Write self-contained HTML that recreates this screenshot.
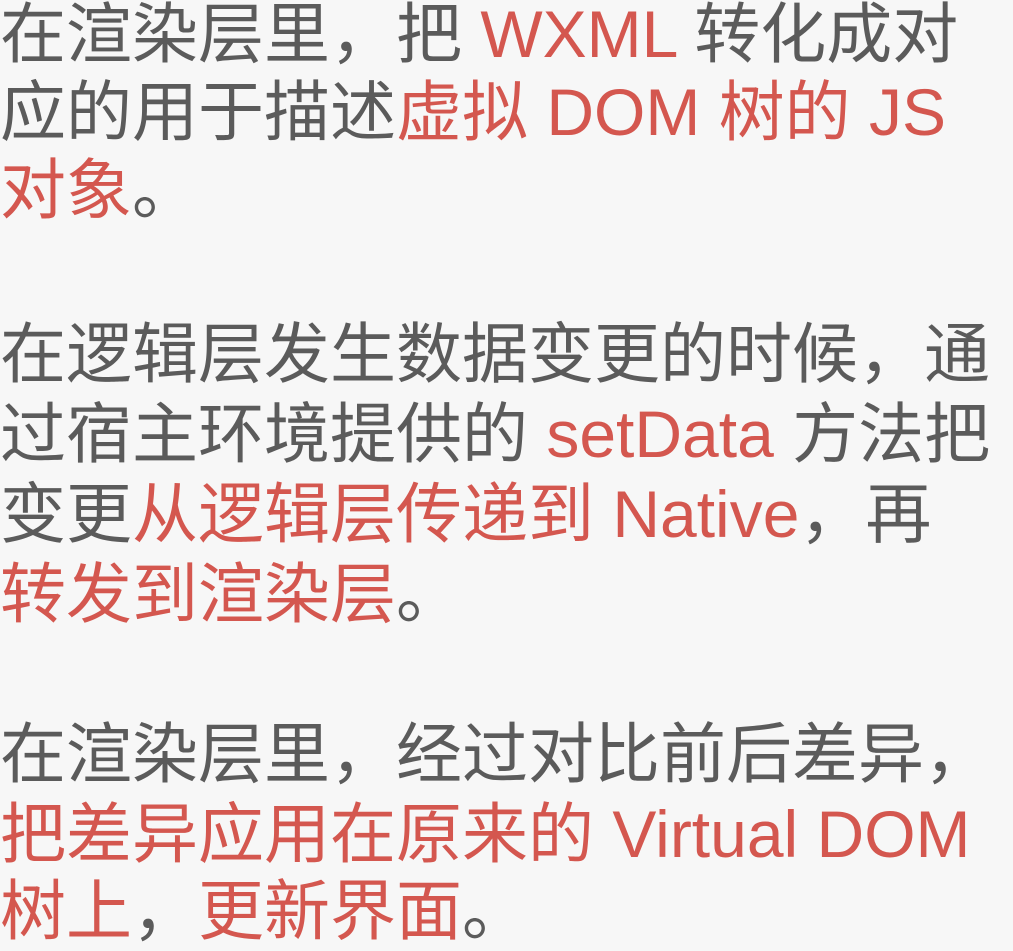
<!DOCTYPE html>
<html><head><meta charset="utf-8"><style>
html,body{margin:0;padding:0;background:#f7f7f7;width:1013px;height:943px;overflow:hidden}
.l{position:absolute;left:0;height:80px;line-height:80px;font-size:66px;white-space:nowrap;color:#5b5b5b;font-family:"Liberation Sans","Noto Sans CJK SC",sans-serif}
.r{color:#d4574f}
</style></head><body>
<div class="l" style="top:-6px">在渲染层里，把 <span class="r">WXML</span> 转化成对</div>
<div class="l" style="top:72px">应的用于描述<span class="r">虚拟 DOM 树的 JS</span></div>
<div class="l" style="top:150px"><span class="r">对象</span>。</div>
<div class="l" style="top:314px">在逻辑层发生数据变更的时候，通</div>
<div class="l" style="top:394px">过宿主环境提供的 <span class="r">setData</span> 方法把</div>
<div class="l" style="top:474px">变更<span class="r">从逻辑层传递到 Native</span>，再</div>
<div class="l" style="top:554px"><span class="r">转发到渲染层</span>。</div>
<div class="l" style="top:714px">在渲染层里，经过对比前后差异，</div>
<div class="l" style="top:794px"><span class="r">把差异应用在原来的 Virtual DOM</span></div>
<div class="l" style="top:871px"><span class="r">树上</span>，<span class="r">更新界面</span>。</div>
</body></html>
